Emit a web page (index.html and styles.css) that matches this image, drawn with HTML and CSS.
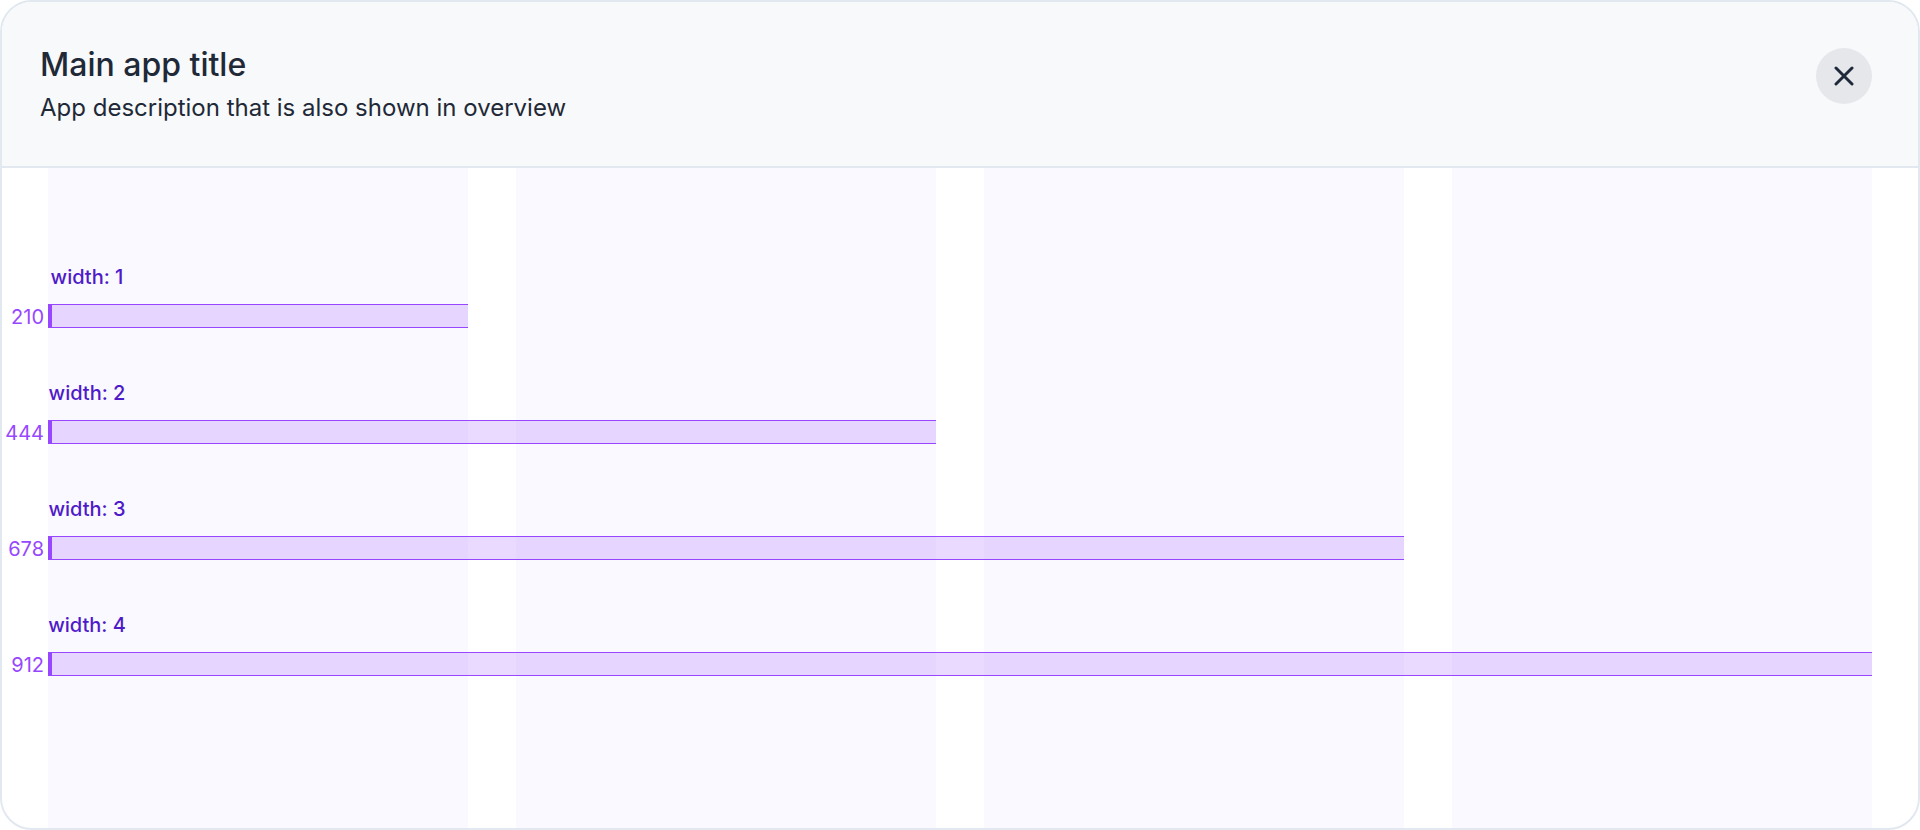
FILE: index.html
```html
<!DOCTYPE html>
<html lang="en">
<head>
<meta charset="utf-8">
<meta name="viewport" content="width=device-width, initial-scale=1">
<title>Main app title</title>
<link rel="stylesheet" href="styles.css">
</head>
<body>
<main class="modal">
  <header class="modal-header">
    <div class="heading">
      <h1 class="title">Main app title</h1>
      <p class="description">App description that is also shown in overview</p>
    </div>
    <button class="close" type="button" aria-label="Close">
      <svg class="close-icon" viewBox="0 0 20 20" aria-hidden="true"><path d="M2 2 18 18M18 2 2 18"/></svg>
    </button>
  </header>
  <section class="columns">
    <div class="column column-1"></div>
    <div class="column column-2"></div>
    <div class="column column-3"></div>
    <div class="column column-4"></div>
    <div class="measure span-1">
      <span class="label">width: 1</span>
      <div class="row"><span class="value">210</span><div class="bar"></div></div>
    </div>
    <div class="measure span-2">
      <span class="label">width: 2</span>
      <div class="row"><span class="value">444</span><div class="bar"></div></div>
    </div>
    <div class="measure span-3">
      <span class="label">width: 3</span>
      <div class="row"><span class="value">678</span><div class="bar"></div></div>
    </div>
    <div class="measure span-4">
      <span class="label">width: 4</span>
      <div class="row"><span class="value">912</span><div class="bar"></div></div>
    </div>
  </section>
</main>
</body>
</html>
```
FILE: styles.css
```css
*,
*::before,
*::after {
  box-sizing: border-box;
}

body {
  margin: 0;
  background: #fff;
  color: #1f2937;
  font-family: Inter, "Liberation Sans", sans-serif;
}

.modal {
  display: flex;
  flex-direction: column;
  min-height: 100vh;
  overflow: hidden;
  border: 2px solid #e2e8f0;
  border-radius: 32px;
  background: #fff;
}

.modal-header {
  display: flex;
  align-items: flex-start;
  justify-content: space-between;
  padding: 46px 46px 42px 38px;
  border-bottom: 2px solid #e2e8f0;
  background: #f7f9fb;
}

.title {
  margin: 0;
  font-size: 32px;
  font-weight: 500;
  line-height: 34px;
}

.description {
  margin: 10px 0 0;
  font-size: 24px;
  font-weight: 400;
  line-height: 32px;
}

.close {
  display: grid;
  place-items: center;
  width: 56px;
  height: 56px;
  padding: 0;
  border: 0;
  border-radius: 50%;
  background: #e5e7eb;
  color: #1e293b;
  cursor: pointer;
}

.close-icon {
  width: 20px;
  height: 20px;
  fill: none;
  stroke: currentColor;
  stroke-width: 3;
  stroke-linecap: round;
}

.columns {
  display: grid;
  flex: 1;
  grid-template-columns: repeat(4, minmax(0, 1fr));
  grid-template-rows: 94px repeat(4, 116px) 1fr;
  column-gap: 48px;
  padding: 0 46px;
}

.column {
  grid-row: 1 / -1;
  background: #faf9ff;
}

.column-1 { grid-column: 1; }
.column-2 { grid-column: 2; }
.column-3 { grid-column: 3; }
.column-4 { grid-column: 4; }

.measure {
  display: flex;
  flex-direction: column;
  gap: 12px;
}

.span-1 { grid-area: 2 / 1 / auto / span 1; }
.span-2 { grid-area: 3 / 1 / auto / span 2; }
.span-3 { grid-area: 4 / 1 / auto / span 3; }
.span-4 { grid-area: 5 / 1 / auto / span 4; }

.label {
  width: 78px;
  color: #4f1bc9;
  font-size: 20px;
  font-weight: 500;
  line-height: 30px;
  text-align: center;
  white-space: nowrap;
}

.row {
  display: flex;
  align-items: flex-start;
  margin-left: -46px;
}

.value {
  flex: 0 0 46px;
  padding-right: 4px;
  color: #9747ff;
  font-size: 20px;
  line-height: 26px;
  text-align: right;
}

.bar {
  flex: 1;
  height: 24px;
  border: solid #9747ff;
  border-width: 1px 0 1px 4px;
  background: rgb(151 71 255 / 20%);
}
```
